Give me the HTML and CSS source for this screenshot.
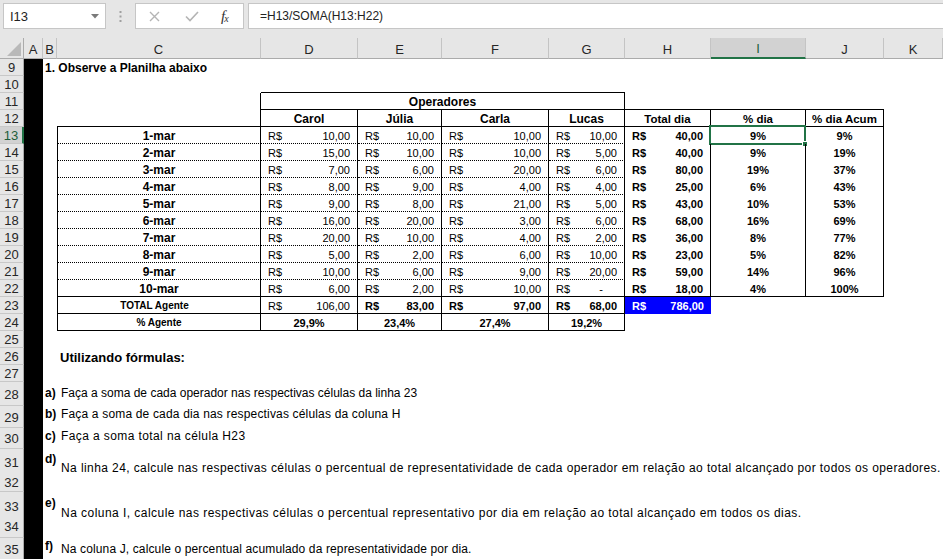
FILE: index.html
```html
<!DOCTYPE html>
<html>
<head>
<meta charset="utf-8">
<link rel="stylesheet" href="styles.css">
</head>
<body>
<div class="toolbar">
  <div class="namebox"><span>I13</span><svg class="caret" width="8" height="5" viewBox="0 0 8 5"><path d="M0 0H8L4 4.5Z" fill="#7a7a7a"/></svg></div>
  <div class="grip"><svg width="3" height="12" viewBox="0 0 3 12"><rect x="0.5" y="0" width="2" height="2" fill="#a0a0a0"/><rect x="0.5" y="4.5" width="2" height="2" fill="#a0a0a0"/><rect x="0.5" y="9" width="2" height="2" fill="#a0a0a0"/></svg></div>
  <div class="fxbox">
    <svg class="ico-x" width="11" height="11" viewBox="0 0 11 11"><path d="M1 1L10 10M10 1L1 10" stroke="#b4b4b4" stroke-width="1.4" fill="none"/></svg>
    <svg class="ico-ok" width="14" height="11" viewBox="0 0 14 11"><path d="M1 5.5L5 9.5L13 1" stroke="#b4b4b4" stroke-width="1.6" fill="none"/></svg>
    <span class="fx"><i>f</i><sub>x</sub></span>
  </div>
  <div class="formula">=H13/SOMA(H13:H22)</div>
</div>

<div class="sheet">
  <div class="hdr">
    <div class="corner"><svg width="14" height="14" viewBox="0 0 14 14"><path d="M14 0V14H0Z" fill="#b9b9b9"/></svg></div>
    <div class="ch">A</div><div class="ch">B</div><div class="ch">C</div><div class="ch">D</div><div class="ch">E</div><div class="ch">F</div><div class="ch">G</div><div class="ch">H</div><div class="ch ch-sel">I</div><div class="ch">J</div><div class="ch">K</div>
  </div>

  <div class="r"><div class="rh">9</div><div class="a"></div><div class="c t9">1. Observe a Planilha abaixo</div></div>
  <div class="r"><div class="rh">10</div><div class="a"></div><div></div><div></div><div class="span4 sb"></div></div>
  <div class="r"><div class="rh">11</div><div class="a"></div><div></div><div class="sr"></div><div class="c hd span4 sr sb">Operadores</div><div class="sb"></div><div class="sb"></div><div class="sb"></div></div>
  <div class="r"><div class="rh">12</div><div class="a"></div><div></div><div class="sr sb"></div>
    <div class="c hd sr sb">Carol</div><div class="c hd sr sb">Júlia</div><div class="c hd sr sb">Carla</div><div class="c hd sr sb">Lucas</div>
    <div class="c hd sm sr sb">Total dia</div><div class="c hd sm sr sb">% dia</div><div class="c hd sm sr sb">% dia Acum</div></div>

  <div class="r"><div class="rh rh-sel">13</div><div class="a"></div><div></div><div class="c lbl sl sr db">1-mar</div>
    <div class="c acc sr db"><span>R$</span><span>10,00</span></div><div class="c acc sr db"><span>R$</span><span>10,00</span></div><div class="c acc sr db"><span>R$</span><span>10,00</span></div><div class="c acc sr db"><span>R$</span><span>10,00</span></div>
    <div class="c acc b sr"><span>R$</span><span>40,00</span></div><div class="c pc sr">9%<div class="sel"><i class="handle"></i></div></div><div class="c pc sr">9%</div></div>
  <div class="r"><div class="rh">14</div><div class="a"></div><div></div><div class="c lbl sl sr db">2-mar</div>
    <div class="c acc sr db"><span>R$</span><span>15,00</span></div><div class="c acc sr db"><span>R$</span><span>10,00</span></div><div class="c acc sr db"><span>R$</span><span>10,00</span></div><div class="c acc sr db"><span>R$</span><span>5,00</span></div>
    <div class="c acc b sr"><span>R$</span><span>40,00</span></div><div class="c pc sr">9%</div><div class="c pc sr">19%</div></div>
  <div class="r"><div class="rh">15</div><div class="a"></div><div></div><div class="c lbl sl sr db">3-mar</div>
    <div class="c acc sr db"><span>R$</span><span>7,00</span></div><div class="c acc sr db"><span>R$</span><span>6,00</span></div><div class="c acc sr db"><span>R$</span><span>20,00</span></div><div class="c acc sr db"><span>R$</span><span>6,00</span></div>
    <div class="c acc b sr"><span>R$</span><span>80,00</span></div><div class="c pc sr">19%</div><div class="c pc sr">37%</div></div>
  <div class="r"><div class="rh">16</div><div class="a"></div><div></div><div class="c lbl sl sr db">4-mar</div>
    <div class="c acc sr db"><span>R$</span><span>8,00</span></div><div class="c acc sr db"><span>R$</span><span>9,00</span></div><div class="c acc sr db"><span>R$</span><span>4,00</span></div><div class="c acc sr db"><span>R$</span><span>4,00</span></div>
    <div class="c acc b sr"><span>R$</span><span>25,00</span></div><div class="c pc sr">6%</div><div class="c pc sr">43%</div></div>
  <div class="r"><div class="rh">17</div><div class="a"></div><div></div><div class="c lbl sl sr db">5-mar</div>
    <div class="c acc sr db"><span>R$</span><span>9,00</span></div><div class="c acc sr db"><span>R$</span><span>8,00</span></div><div class="c acc sr db"><span>R$</span><span>21,00</span></div><div class="c acc sr db"><span>R$</span><span>5,00</span></div>
    <div class="c acc b sr"><span>R$</span><span>43,00</span></div><div class="c pc sr">10%</div><div class="c pc sr">53%</div></div>
  <div class="r"><div class="rh">18</div><div class="a"></div><div></div><div class="c lbl sl sr db">6-mar</div>
    <div class="c acc sr db"><span>R$</span><span>16,00</span></div><div class="c acc sr db"><span>R$</span><span>20,00</span></div><div class="c acc sr db"><span>R$</span><span>3,00</span></div><div class="c acc sr db"><span>R$</span><span>6,00</span></div>
    <div class="c acc b sr"><span>R$</span><span>68,00</span></div><div class="c pc sr">16%</div><div class="c pc sr">69%</div></div>
  <div class="r"><div class="rh">19</div><div class="a"></div><div></div><div class="c lbl sl sr db">7-mar</div>
    <div class="c acc sr db"><span>R$</span><span>20,00</span></div><div class="c acc sr db"><span>R$</span><span>10,00</span></div><div class="c acc sr db"><span>R$</span><span>4,00</span></div><div class="c acc sr db"><span>R$</span><span>2,00</span></div>
    <div class="c acc b sr"><span>R$</span><span>36,00</span></div><div class="c pc sr">8%</div><div class="c pc sr">77%</div></div>
  <div class="r"><div class="rh">20</div><div class="a"></div><div></div><div class="c lbl sl sr db">8-mar</div>
    <div class="c acc sr db"><span>R$</span><span>5,00</span></div><div class="c acc sr db"><span>R$</span><span>2,00</span></div><div class="c acc sr db"><span>R$</span><span>6,00</span></div><div class="c acc sr db"><span>R$</span><span>10,00</span></div>
    <div class="c acc b sr"><span>R$</span><span>23,00</span></div><div class="c pc sr">5%</div><div class="c pc sr">82%</div></div>
  <div class="r"><div class="rh">21</div><div class="a"></div><div></div><div class="c lbl sl sr db">9-mar</div>
    <div class="c acc sr db"><span>R$</span><span>10,00</span></div><div class="c acc sr db"><span>R$</span><span>6,00</span></div><div class="c acc sr db"><span>R$</span><span>9,00</span></div><div class="c acc sr db"><span>R$</span><span>20,00</span></div>
    <div class="c acc b sr"><span>R$</span><span>59,00</span></div><div class="c pc sr">14%</div><div class="c pc sr">96%</div></div>
  <div class="r"><div class="rh">22</div><div class="a"></div><div></div><div class="c lbl sl sr sb">10-mar</div>
    <div class="c acc sr sb"><span>R$</span><span>6,00</span></div><div class="c acc sr sb"><span>R$</span><span>2,00</span></div><div class="c acc sr sb"><span>R$</span><span>10,00</span></div><div class="c acc sr sb"><span>R$</span><span class="dash">-</span></div>
    <div class="c acc b sr sb"><span>R$</span><span>18,00</span></div><div class="c pc sr sb">4%</div><div class="c pc sr sb">100%</div></div>
  <div class="r"><div class="rh">23</div><div class="a"></div><div></div><div class="c lbl small shift sl sr sb">TOTAL Agente</div>
    <div class="c acc sr sb"><span>R$</span><span>106,00</span></div><div class="c acc b sr sb"><span>R$</span><span>83,00</span></div><div class="c acc b sr sb"><span>R$</span><span>97,00</span></div><div class="c acc b sr sb"><span>R$</span><span>68,00</span></div>
    <div class="c acc b blue"><span>R$</span><span>786,00</span></div></div>
  <div class="r"><div class="rh">24</div><div class="a"></div><div></div><div class="c lbl small sl sr sb">% Agente</div>
    <div class="c pc sr sb">29,9%</div><div class="c pc sr sb">23,4%</div><div class="c pc sr sb">27,4%</div><div class="c pc sr sb">19,2%</div></div>
  <div class="r"><div class="rh">25</div><div class="a"></div></div>
  <div class="r"><div class="rh">26</div><div class="a"></div><div></div><div class="c t26">Utilizando fórmulas:</div></div>
  <div class="r"><div class="rh">27</div><div class="a"></div></div>

  <div class="r h28"><div class="rh">28</div><div class="a"></div><div class="c ilbl p28">a)</div><div class="c itxt p28">Faça a soma de cada operador nas respectivas células da linha 23</div></div>
  <div class="r h29"><div class="rh">29</div><div class="a"></div><div class="c ilbl p29">b)</div><div class="c itxt p29 ls17">Faça a soma de cada dia nas respectivas células da coluna H</div></div>
  <div class="r h30"><div class="rh">30</div><div class="a"></div><div class="c ilbl p30">c)</div><div class="c itxt p30 ls40">Faça a soma total na célula H23</div></div>
  <div class="r h31"><div class="rh">31</div><div class="a"></div><div class="c ilbl p31l">d)</div><div class="c itxt p31t ls41">Na linha 24, calcule nas respectivas células o percentual de representatividade de cada operador em relação ao total alcançado por todos os operadores.</div></div>
  <div class="r h32"><div class="rh">32</div><div class="a"></div></div>
  <div class="r h33"><div class="rh">33</div><div class="a"></div><div class="c ilbl p33l">e)</div><div class="c itxt p33t ls46">Na coluna I, calcule nas respectivas células o percentual representativo por dia em relação ao total alcançado em todos os dias.</div></div>
  <div class="r h34"><div class="rh">34</div><div class="a"></div></div>
  <div class="r h35"><div class="rh">35</div><div class="a"></div><div class="c ilbl p35l">f)</div><div class="c itxt p35t ls13">Na coluna J, calcule o percentual acumulado da representatividade por dia.</div></div>
</div>
</body>
</html>
```
FILE: styles.css
```css
* { box-sizing: border-box; }
html, body { margin: 0; padding: 0; }
body {
  width: 943px;
  height: 559px;
  overflow: hidden;
  background: #fff;
  color: #000;
  font-family: "Liberation Sans", Arial, sans-serif;
}

/* ---------- formula bar ---------- */
.toolbar {
  height: 38px;
  background: #e6e6e6;
  display: flex;
  align-items: flex-start;
  padding: 3px 0 0 3px;
}
.namebox {
  width: 103px;
  height: 26px;
  background: #fff;
  border: 1px solid #c6c6c6;
  display: flex;
  align-items: center;
  justify-content: space-between;
  padding: 0 6px 0 6px;
  font-size: 13px;
  color: #222;
}
.caret { margin-top: 1px; }
.grip {
  width: 29px;
  height: 26px;
  display: flex;
  align-items: center;
  justify-content: center;
  padding-top: 2px;
}
.fxbox {
  width: 109px;
  height: 26px;
  background: #fff;
  border: 1px solid #c6c6c6;
  display: flex;
  align-items: center;
  padding-left: 13px;
}
.ico-x { margin-right: 25px; }
.ico-ok { margin-right: 22px; }
.fx {
  font-family: "Liberation Serif", serif;
  font-size: 15px;
  color: #333;
  line-height: 1;
}
.fx sub { font-size: 10px; font-style: italic; vertical-align: -1px; margin-left: -1px; }
.formula {
  flex: 1;
  margin-left: 4px;
  height: 26px;
  background: #fff;
  border: 1px solid #c6c6c6;
  border-right: none;
  padding-left: 11px;
  display: flex;
  align-items: center;
  font-size: 12px;
  color: #222;
}

/* ---------- sheet grid ---------- */
.sheet { --cols: 24px 19px 14px 204px 97px 84px 107px 76px 86px 95px 78px 59px; }
.hdr {
  display: grid;
  grid-template-columns: var(--cols);
  height: 21px;
  background: #e6e6e6;
}
.corner {
  border-right: 1px solid #ababab;
  border-bottom: 1px solid #ababab;
  display: flex;
  align-items: flex-end;
  justify-content: flex-end;
  padding: 0 2px 2px 0;
}
.ch {
  border-right: 1px solid #c4c4c4;
  border-bottom: 1px solid #ababab;
  display: flex;
  align-items: center;
  justify-content: center;
  font-size: 13px;
  color: #262626;
  padding-top: 2px;
}
.ch-sel {
  background: #d2d2d2;
  border-bottom: 2px solid #217346;
  color: #1d5d3a;
}

.r {
  display: grid;
  grid-template-columns: var(--cols);
  height: 17px;
}
.rh {
  background: #e6e6e6;
  border-right: 1px solid #ababab;
  border-bottom: 1px solid #c8c8c8;
  display: flex;
  align-items: center;
  justify-content: center;
  font-size: 13px;
  color: #262626;
  padding-top: 1px;
}
.rh-sel {
  background: #d2d2d2;
  border-right: 2px solid #217346;
  color: #1d5d3a;
}
.a { background: #000; }

.c {
  display: flex;
  align-items: center;
  white-space: nowrap;
  min-width: 0;
  font-size: 11px;
  position: relative;
  padding-top: 1px;
}
.span4 { grid-column: span 4; }
.sb { border-bottom: 1px solid #000; }
.db { border-bottom: 1px dotted #000; }
.sr { border-right: 1px solid #000; }
.sl { border-left: 1px solid #000; }

.t9 { font-size: 12px; font-weight: bold; padding-left: 2px; }
.t26 { font-size: 13px; font-weight: bold; padding-left: 3px; }
.hd { justify-content: center; font-weight: bold; font-size: 12px; }
.hd.sm { font-size: 11.5px; }
.lbl { justify-content: center; font-weight: bold; font-size: 12px; }
.lbl.small { font-size: 10px; }
.lbl.shift { padding-right: 9px; }
.acc { justify-content: space-between; padding-left: 7px; padding-right: 7px; }
.b { font-weight: bold; }
.pc { justify-content: center; font-weight: bold; font-size: 11px; }
.dash { padding-right: 14px; }
.blue { background: #0000ff; color: #fff; }

.sel {
  position: absolute;
  left: -2px;
  top: -2px;
  right: -1px;
  bottom: -1px;
  border: 2px solid #217346;
}
.handle {
  position: absolute;
  right: -4px;
  bottom: -4px;
  width: 6px;
  height: 6px;
  background: #217346;
  border: 1px solid #fff;
}

/* ---------- instruction rows ---------- */
.h28 { height: 24px; }
.h29 { height: 22px; }
.h30 { height: 21px; }
.h31 { height: 23px; }
.h32 { height: 20px; }
.h33 { height: 23px; }
.h34 { height: 23px; }
.h35 { height: 22px; }
.ilbl { font-size: 12px; font-weight: bold; padding-left: 2px; align-items: flex-start; line-height: 14px; }
.itxt { font-size: 12px; padding-left: 4px; align-items: flex-start; line-height: 14px; }
.p28 { padding-top: 4px; }
.p29 { padding-top: 1px; }
.p30 { padding-top: 1px; }
.p31l { padding-top: 3px; }
.p31t { padding-top: 12px; }
.p33l { padding-top: 4px; }
.p33t { padding-top: 14px; }
.p35l { padding-top: 1px; }
.p35t { padding-top: 4px; }
.ls13 { letter-spacing: 0.13px; }
.ls17 { letter-spacing: 0.17px; }
.ls40 { letter-spacing: 0.4px; }
.ls41 { letter-spacing: 0.41px; }
.ls46 { letter-spacing: 0.46px; }
```
